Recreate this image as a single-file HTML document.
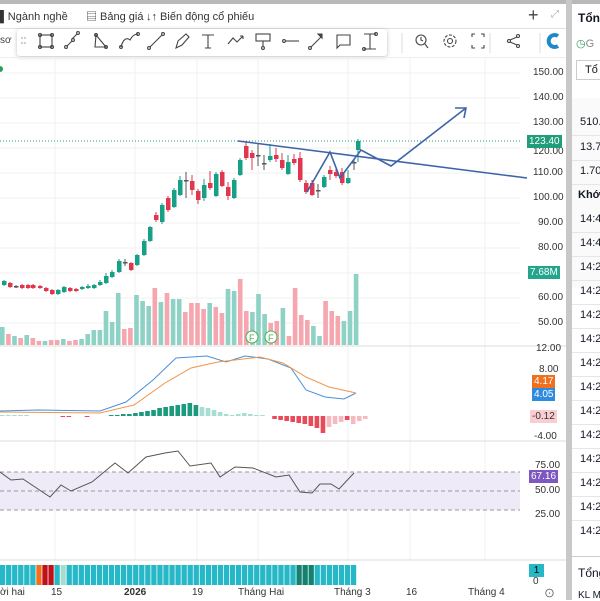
<!DOCTYPE html>
<html><head><meta charset="utf-8"><style>
*{margin:0;padding:0;box-sizing:border-box}
body{width:600px;height:600px;overflow:hidden;background:#fff;font-family:"Liberation Sans","Noto Sans CJK SC",sans-serif;position:relative;color:#131722}
.a{position:absolute;white-space:nowrap}
.ax{position:absolute;left:533px;font-size:10px;color:#333}
.tag{position:absolute;font-size:10px;color:#fff;padding:1px 2px;line-height:11px}
.row{position:absolute;left:6px;font-size:11px;white-space:nowrap}
.hl{position:absolute;left:572px;width:28px;height:1px;background:#e6e6e6}
</style></head><body>
<div class="a" style="left:0;top:0;width:600px;height:4px;background:#b8b8b8"></div>
<div class="a" style="left:566px;top:0;width:6px;height:600px;background:#c8c8c8"></div>
<!-- tabs -->
<div class="a" style="top:11px;left:0;font-size:11px;color:#333;line-height:13px">▌Ngành nghề</div>
<div class="a" style="top:11px;left:86px;font-size:11px;color:#333;line-height:13px">▤ Bảng giá</div>
<div class="a" style="top:11px;left:146px;font-size:11px;color:#333;line-height:13px">↓↑ Biến động cổ phiếu</div>
<div class="a" style="top:5px;left:528px;font-size:18px;color:#444">+</div>
<div class="a" style="top:9px;left:551px;font-size:10px;color:#aaa">⤢</div>
<div class="a" style="top:28px;left:0;width:566px;height:1px;background:#e0e0e0"></div>
<div class="a" style="top:35px;left:0;font-size:10px;color:#444">sơ</div>
<!-- toolbar -->
<div class="a" style="top:29px;left:17px;width:370px;height:27px;background:#fff;box-shadow:0 1px 4px rgba(0,0,0,.25);border-radius:3px"></div>
<svg class="a" style="left:0;top:28px" width="566" height="30" fill="none" stroke="#444" stroke-width="1.1">
<g stroke="#ccc"><circle cx="22" cy="10" r=".6"/><circle cx="22" cy="15" r=".6"/><circle cx="25" cy="10" r=".6"/><circle cx="25" cy="15" r=".6"/></g>
<rect x="40" y="7" width="12" height="12"/><circle cx="40" cy="7" r="1.5"/><circle cx="52" cy="7" r="1.5"/><circle cx="40" cy="19" r="1.5"/><circle cx="52" cy="19" r="1.5"/>
<path d="M67 18l5-5M72 11l5-5"/><circle cx="66" cy="19" r="1.4"/><circle cx="78" cy="5" r="1.4"/><circle cx="73" cy="12" r="1.4"/>
<path d="M96 7l10 12H95z"/><circle cx="96" cy="7" r="1.4"/><circle cx="106" cy="19" r="1.4"/>
<path d="M121 19c2-8 6-10 9-7 2-4 5-6 8-6"/><circle cx="121" cy="19" r="1.4"/><circle cx="138" cy="6" r="1.4"/>
<path d="M150 19l12-12"/><circle cx="149" cy="20" r="1.4"/><circle cx="163" cy="6" r="1.4"/>
<path d="M176 20l2-7 8-7 3 3-7 8z"/>
<path d="M202 7h12M208 7v13M205 20h6"/>
<path d="M228 16l5-6 4 4 6-6M243 8h-3M243 8v3"/>
<rect x="256" y="6" width="14" height="7"/><path d="M263 13v5"/><circle cx="263" cy="20" r="1.4"/>
<path d="M285 13h14"/><circle cx="284" cy="13" r="1.4"/>
<path d="M311 19l10-10"/><circle cx="310" cy="20" r="1.4"/><path d="M318 6l4 0 0 4z" fill="#444"/>
<path d="M337 7h13v10h-10l-3 3z"/>
<path d="M364 6h12M364 21h12M370 6v15"/><circle cx="376" cy="6" r="1.4"/><circle cx="364" cy="21" r="1.4"/>
<path d="M402 5v20M490 5v20M540 5v20" stroke="#e0e0e0"/>
<circle cx="421" cy="12" r="5"/><path d="M421 9v3l2 1M425 16l3 4"/>
<circle cx="450" cy="13" r="2.5"/><circle cx="450" cy="13" r="6" stroke-dasharray="3 1.5"/>
<path d="M472 9v-3h3M481 6h3v3M484 17v3h-3M475 20h-3v-3"/>
<circle cx="518" cy="8" r="1.5"/><circle cx="518" cy="18" r="1.5"/><circle cx="509" cy="13" r="1.5"/><path d="M510 12l7-3M510 14l7 3"/>
<path d="M558 8a6 6 0 1 0 0 10" stroke="#1e88c8" stroke-width="4"/>
</svg>
<div class="a" style="top:57px;left:0;width:566px;height:1px;background:#eee"></div>
<div class="a" style="top:66px;left:-3px;width:6px;height:6px;border-radius:3px;background:#2a9d5c"></div>
<svg class="a" style="left:0;top:58px" width="566" height="542" id="ch"></svg>
<div class="ax" style="top:67px">150.00</div><div class="ax" style="top:92px">140.00</div><div class="ax" style="top:117px">130.00</div>
<div class="ax" style="top:146px">120.00</div><div class="ax" style="top:167px">110.00</div><div class="ax" style="top:192px">100.00</div>
<div class="ax" style="top:217px;left:538px">90.00</div><div class="ax" style="top:242px;left:538px">80.00</div><div class="ax" style="top:292px;left:538px">60.00</div><div class="ax" style="top:317px;left:538px">50.00</div>
<div class="tag" style="top:135px;left:527px;background:#1f9e7a">123.40</div>
<div class="tag" style="top:266px;left:528px;background:#22a58a">7.68M</div>
<div class="ax" style="top:343px;left:536px">12.00</div><div class="ax" style="top:364px;left:539px">8.00</div>
<div class="tag" style="top:375px;left:532px;background:#f07020">4.17</div>
<div class="tag" style="top:388px;left:532px;background:#2f8be0">4.05</div>
<div class="tag" style="top:410px;left:530px;background:#f9cdd2;color:#333">-0.12</div>
<div class="ax" style="top:431px;left:534px">-4.00</div>
<div class="ax" style="top:460px;left:535px">75.00</div>
<div class="tag" style="top:470px;left:529px;background:#7e57c2">67.16</div>
<div class="ax" style="top:485px;left:535px">50.00</div><div class="ax" style="top:509px;left:535px">25.00</div>
<div class="tag" style="top:564px;left:529px;background:#26b8c6;color:#000">&nbsp;1&nbsp;</div>
<div class="ax" style="top:576px;left:533px">0</div>
<div class="a" style="top:587px;left:0;font-size:10px;color:#333">ời hai</div>
<div class="a" style="top:587px;left:51px;font-size:10px;color:#333">15</div>
<div class="a" style="top:587px;left:124px;font-size:10px;color:#333;font-weight:bold">2026</div>
<div class="a" style="top:587px;left:192px;font-size:10px;color:#333">19</div>
<div class="a" style="top:587px;left:238px;font-size:10px;color:#333">Tháng Hai</div>
<div class="a" style="top:587px;left:334px;font-size:10px;color:#333">Tháng 3</div>
<div class="a" style="top:587px;left:406px;font-size:10px;color:#333">16</div>
<div class="a" style="top:587px;left:468px;font-size:10px;color:#333">Tháng 4</div>
<div class="a" style="top:585px;left:544px;font-size:11px;color:#555">⊙</div>
<!-- sidebar -->
<div class="a" style="left:578px;top:11px;font-size:12px;font-weight:bold">Tổn</div>
<div class="a" style="left:576px;top:37px;font-size:11px;color:#2a9d5c">◷<span style="color:#888">G</span></div>
<div class="a" style="left:576px;top:60px;width:30px;height:20px;border:1px solid #ccc;font-size:11px;padding:3px 0 0 8px">Tổ</div>
<div class="a" style="left:572px;top:98px;width:28px;height:190px;background:#fafafa"></div>
<div class="row" style="left:580px;top:116px">510.</div><div class="hl" style="top:135px"></div>
<div class="row" style="left:580px;top:141px">13.7</div><div class="hl" style="top:160px"></div>
<div class="row" style="left:580px;top:165px">1.70</div><div class="hl" style="top:184px"></div>
<div class="row" style="left:578px;top:189px;font-weight:bold">Khớp</div>
<div class="row" style="left:580px;top:213px">14:46</div><div class="hl" style="top:232px"></div>
<div class="row" style="left:580px;top:237px">14:45</div><div class="hl" style="top:256px"></div>
<div class="row" style="left:580px;top:261px">14:29</div><div class="hl" style="top:280px"></div>
<div class="row" style="left:580px;top:285px">14:29</div><div class="hl" style="top:304px"></div>
<div class="row" style="left:580px;top:309px">14:29</div><div class="hl" style="top:328px"></div>
<div class="row" style="left:580px;top:333px">14:29</div><div class="hl" style="top:352px"></div>
<div class="row" style="left:580px;top:357px">14:29</div><div class="hl" style="top:376px"></div>
<div class="row" style="left:580px;top:381px">14:29</div><div class="hl" style="top:400px"></div>
<div class="row" style="left:580px;top:405px">14:29</div><div class="hl" style="top:424px"></div>
<div class="row" style="left:580px;top:429px">14:29</div><div class="hl" style="top:448px"></div>
<div class="row" style="left:580px;top:453px">14:29</div><div class="hl" style="top:472px"></div>
<div class="row" style="left:580px;top:477px">14:29</div><div class="hl" style="top:496px"></div>
<div class="row" style="left:580px;top:501px">14:29</div><div class="hl" style="top:520px"></div>
<div class="row" style="left:580px;top:525px">14:28</div>
<div class="a" style="left:572px;top:556px;width:28px;height:1px;background:#ccc"></div>
<div class="row" style="left:578px;top:566px;font-size:12px">Tổng</div>
<div class="row" style="left:578px;top:590px;font-size:10px">KL M</div>
<script>
var s=document.getElementById('ch'),h='',O=58;
function Y(y){return y-O}
[73,98,123,148,173,198,223,248,273,298,323].forEach(function(y){h+='<line x1="0" x2="520" y1="'+Y(y)+'" y2="'+Y(y)+'" stroke="#f0f0f0"/>'});
[55,135,197,258,348,410,485].forEach(function(x){h+='<line x1="'+x+'" x2="'+x+'" y1="0" y2="'+Y(560)+'" stroke="#f0f0f0"/>'});
[346,441,560].forEach(function(y){h+='<line x1="0" x2="566" y1="'+Y(y)+'" y2="'+Y(y)+'" stroke="#ddd"/>'});
var v=[[327,1],[334,0],[336,1],[338,0],[335,1],[338,0],[341,0],[341,1],[340,0],[340,0],[339,1],[341,0],[340,0],[339,1],[334,1],[330,1],[330,1],[311,1],[322,1],[293,1],[329,0],[328,0],[295,1],[301,1],[306,1],[288,0],[302,1],[293,0],[299,1],[299,1],[312,0],[303,0],[303,0],[309,0],[303,1],[307,0],[313,0],[289,1],[291,1],[279,0],[311,0],[312,1],[294,1],[314,1],[323,0],[321,0],[308,1],[336,0],[288,0],[315,0],[320,0],[326,1],[336,1],[301,0],[311,0],[316,0],[321,1],[311,1],[274,1]];
v.forEach(function(b,i){var x=i*6.1;h+='<rect x="'+x+'" y="'+Y(b[0])+'" width="4.6" height="'+(345-b[0])+'" fill="'+(b[1]?'#8ed1c5':'#f5a6ae')+'"/>'});
h+='<circle cx="252" cy="'+Y(337)+'" r="6" fill="#fff" stroke="#4caf50"/><text x="249" y="'+Y(341)+'" font-size="9" fill="#4caf50">F</text>';
h+='<circle cx="271" cy="'+Y(337)+'" r="6" fill="#fff" stroke="#4caf50"/><text x="268" y="'+Y(341)+'" font-size="9" fill="#4caf50">F</text>';
h+='<line x1="0" x2="522" y1="'+Y(141)+'" y2="'+Y(141)+'" stroke="#1f9e7a" stroke-dasharray="1 2"/>';
var c=[[2,285,281,280,286],[8,283,287,282,288],[14,286,287,285,288],[20,285,288,284,289],[26,285,288,284,289],[31,285,288,284,289],[38,286,288,285,289],[44,288,291,287,292],[50,290,294,289,295],[56,294,290,289,295],[62,292,287,286,293],[68,288,291,287,292],[74,289,291,288,292],[80,289,287,286,290],[86,288,286,284,289],[92,288,285,284,289],[98,285,282,280,286],[104,283,276,273,284],[110,277,272,270,278],[117,272,261,259,273],[123,262,263,259,266],[129,263,270,262,271],[135,265,255,254,266],[142,255,241,239,256],[148,241,227,226,242],[154,215,220,212,222],[160,222,205,203,224],[166,198,210,196,212],[172,207,190,188,208],[178,195,180,176,196],[184,180,181,172,198],[190,181,190,175,195],[196,191,200,189,204],[202,198,185,179,201],[208,183,188,171,190],[214,196,174,172,197],[220,172,186,170,187],[226,187,196,182,200],[232,198,180,178,199],[238,175,160,158,176],[244,146,158,141,160],[250,153,158,150,170],[256,155,156,144,166],[262,163,164,155,170],[268,160,156,144,162],[274,155,159,148,162],[280,160,168,153,170],[286,174,162,155,175],[292,159,163,154,165],[298,158,180,152,182],[304,183,192,180,194],[310,183,195,180,196],[316,190,191,184,198],[322,187,177,175,188],[328,170,174,166,180],[334,172,176,168,178],[340,172,183,168,185],[346,183,178,170,184],[352,162,163,160,170],[356,150,141,139,162]];
c.forEach(function(k){var g=k[2]<=k[1],col=g?'#16a085':'#e0374f';var t=Math.min(k[1],k[2]),b=Math.max(k[1],k[2]);if(b-t<1.5){b=t+1.5;col='#555'}
h+='<line x1="'+(k[0]+2)+'" x2="'+(k[0]+2)+'" y1="'+Y(k[3])+'" y2="'+Y(k[4])+'" stroke="'+col+'"/><rect x="'+k[0]+'" y="'+Y(t)+'" width="4.5" height="'+(b-t)+'" fill="'+col+'"/>'});
function P(a){return a.map(function(p){return p[0]+','+Y(p[1])}).join(' ')}
h+='<polyline points="'+P([[238,141],[527,178]])+'" fill="none" stroke="#3f63a8" stroke-width="1.5"/>';
h+='<polyline points="'+P([[307,192],[330,152],[340,178],[361,150],[391,166],[466,108]])+'" fill="none" stroke="#3f63a8" stroke-width="1.6"/>';
h+='<polyline points="'+P([[455,108],[466,108],[464,118]])+'" fill="none" stroke="#3f63a8" stroke-width="1.6"/>';
var m=[1,1,1,1,1,0,0,0,0,0,-1,-1,0,0,-1,0,0,0,1,1,2,2,3,4,5,6,8,9,10,11,12,13,11,9,8,6,4,2,1,2,3,2,1,1,0,-3,-4,-5,-6,-7,-8,-10,-12,-17,-11,-8,-6,-4,-8,-5,-3];
m.forEach(function(d,i){var x=i*6.05,z=416;if(d==0)return;var col=d>0?(i>32||i<18?'#a8ddd3':'#1b9a7e'):(i>53?'#f7b9c0':'#e84a5a');if(i==57)col='#e84a5a';
h+='<rect x="'+x+'" y="'+Y(d>0?z-d:z)+'" width="4.6" height="'+Math.abs(d)+'" fill="'+col+'"/>'});
h+='<polyline points="'+P([[0,411],[38,410],[100,411],[126,402],[153,380],[176,358],[207,356],[226,362],[245,356],[268,359],[291,368],[306,390],[325,397],[344,399],[356,393]])+'" fill="none" stroke="#4a90d9" stroke-width="1"/>';
h+='<polyline points="'+P([[0,412],[100,413],[134,405],[165,383],[191,368],[218,362],[260,357],[283,363],[306,377],[329,387],[356,393]])+'" fill="none" stroke="#f0954a" stroke-width="1"/>';
h+='<rect x="0" y="'+Y(472)+'" width="520" height="38" fill="#efeaf8"/>';
[472,491,510].forEach(function(y){h+='<line x1="0" x2="520" y1="'+Y(y)+'" y2="'+Y(y)+'" stroke="#999" stroke-dasharray="4 3"/>'});
h+='<polyline points="'+P([[0,472],[11,480],[23,479],[50,497],[61,485],[71,491],[92,482],[115,463],[128,473],[146,457],[165,453],[178,451],[190,466],[211,463],[220,477],[235,467],[253,468],[276,477],[289,475],[300,492],[312,493],[320,484],[331,484],[339,489],[354,473]])+'" fill="none" stroke="#555" stroke-width="1"/>';
for(var i=0;i<59;i++){var x=i*6.05,col='#26b8c6';if(i==6)col='#f07020';if(i==7||i==8)col='#c0101a';if(i==10)col='#a8dcd0';if(i>=49&&i<=51)col='#14806e';
h+='<rect x="'+x+'" y="'+Y(565)+'" width="5.3" height="20" fill="'+col+'"/>'}
s.innerHTML=h;
</script>
</body></html>
